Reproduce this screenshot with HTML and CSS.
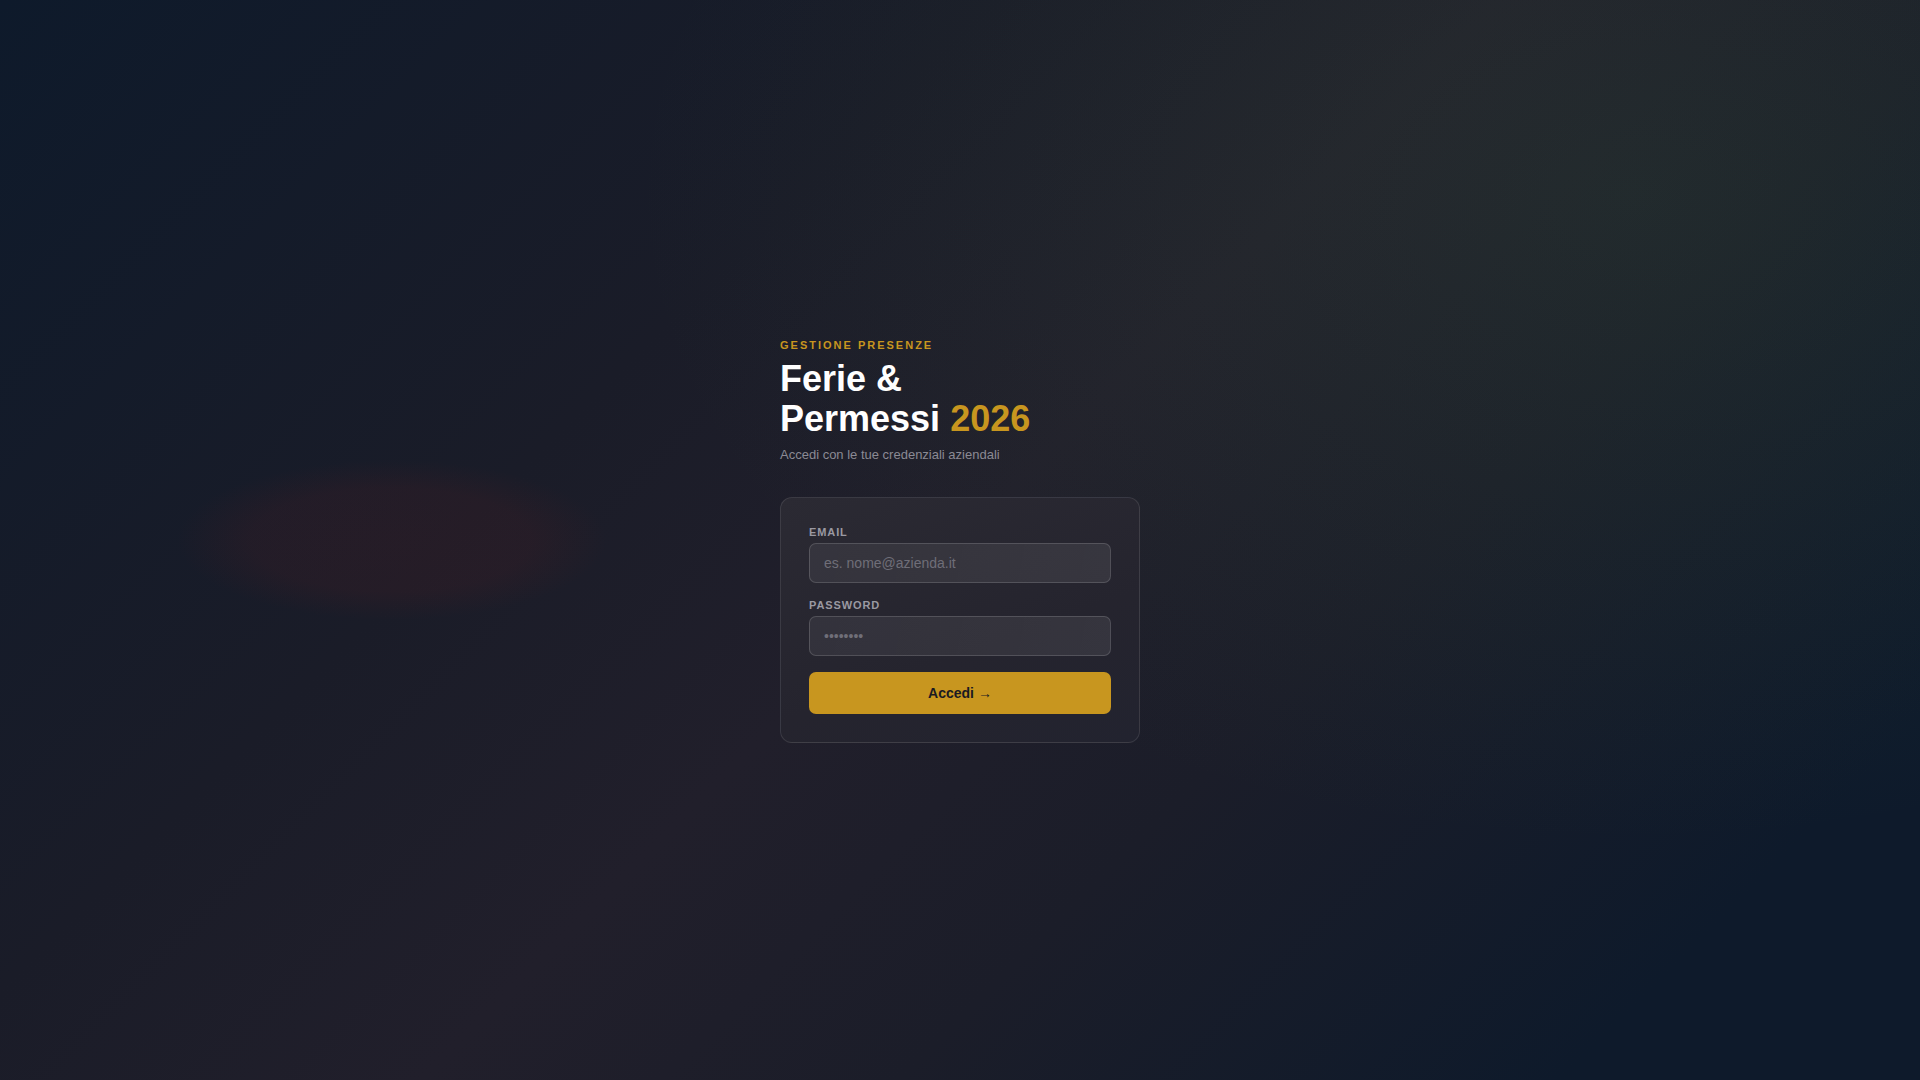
FILE: index.html
```html
<!DOCTYPE html>
<html lang="it">
<head>
<meta charset="utf-8">
<title>Ferie &amp; Permessi 2026</title>
<link rel="stylesheet" href="styles.css">
</head>
<body>
<main class="page">
  <div class="login">
    <header class="intro">
      <p class="eyebrow">GESTIONE PRESENZE</p>
      <h1 class="title">Ferie &amp;<br>Permessi <span class="year">2026</span></h1>
      <p class="subtitle">Accedi con le tue credenziali aziendali</p>
    </header>
    <form class="card">
      <div class="field">
        <label class="label" for="email">EMAIL</label>
        <input class="input" id="email" type="email" placeholder="es. nome@azienda.it">
      </div>
      <div class="field">
        <label class="label" for="pw">PASSWORD</label>
        <input class="input" id="pw" type="password" placeholder="••••••••">
      </div>
      <button class="submit" type="button">Accedi →</button>
    </form>
  </div>
</main>
</body>
</html>
```
FILE: styles.css
```css
* { box-sizing: border-box; }
html, body { margin: 0; height: 100%; }
body {
  font-family: "Liberation Sans", Arial, sans-serif;
  color: #fff;
  background-color: #0e1a2b;
  background-image:
    radial-gradient(ellipse 215px 80px at 392px 540px, rgba(80, 30, 35, 0.22) 0%, rgba(80, 30, 35, 0.2) 65%, rgba(80, 30, 35, 0) 100%),
    radial-gradient(ellipse 1000px 650px at 85% 18%, rgba(70, 130, 70, 0.13), rgba(70, 130, 70, 0) 100%),
    linear-gradient(135deg, #0e1a2b 0%, #1a1c28 33%, #211f2b 50%, #1b1d29 66%, #0e1a2b 88%);
}
.page {
  min-height: 100vh;
  padding-top: 2px;
  display: flex;
  align-items: center;
  justify-content: center;
}
.login { width: 360px; }
.intro { margin-bottom: 35px; }
.eyebrow {
  margin: 0;
  font-size: 11px;
  font-weight: 700;
  letter-spacing: 2px;
  color: #c8961f;
}
.title {
  margin: 8px 0 0;
  font-size: 36px;
  line-height: 40px;
  font-weight: 700;
  color: #ffffff;
}
.year { color: #c8961f; }
.subtitle {
  margin: 8px 0 0;
  font-size: 13px;
  color: #8b8a94;
}
.card {
  margin: 0;
  padding: 28px;
  border: 1px solid rgba(255, 255, 255, 0.1);
  border-radius: 12px;
  background: linear-gradient(160deg, #2b2a33 0%, #25242e 60%, #22232f 100%);
}
.field { margin-bottom: 16px; }
.label {
  display: block;
  margin-bottom: 5px;
  font-size: 11px;
  font-weight: 700;
  letter-spacing: 0.9px;
  color: #9a99a2;
}
.input {
  display: block;
  width: 100%;
  height: 40px;
  padding: 0 14px;
  border: 1px solid rgba(255, 255, 255, 0.15);
  border-radius: 7px;
  background: linear-gradient(100deg, rgba(255, 255, 255, 0.06), rgba(255, 255, 255, 0.08));
  font-family: "Liberation Sans", Arial, sans-serif;
  font-size: 14px;
  color: #ddd;
  outline: none;
}
.input::placeholder { color: #6f6e78; }
.submit {
  display: block;
  width: 100%;
  height: 42px;
  border: 0;
  border-radius: 7px;
  background: #c8961f;
  font-family: "Liberation Sans", Arial, sans-serif;
  font-size: 14px;
  font-weight: 700;
  color: #1a1a22;
  cursor: pointer;
}
```
